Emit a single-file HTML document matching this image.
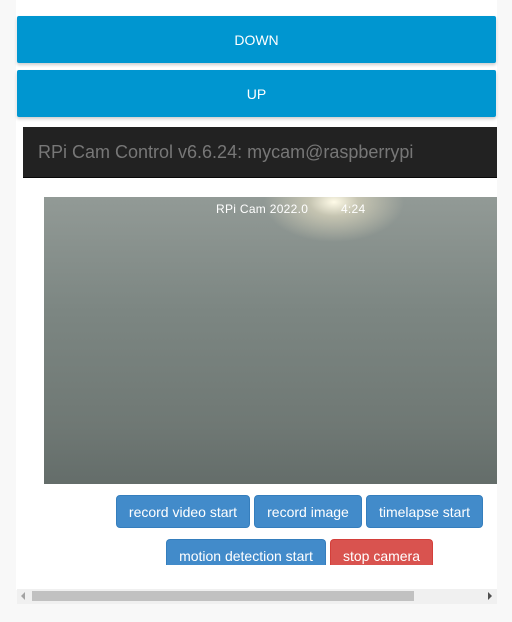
<!DOCTYPE html><html><head><style>
body{margin:0;width:512px;height:622px;background:#f8f8f8;font-family:"Liberation Sans",sans-serif;position:relative;overflow:hidden}
.a{position:absolute}
.w{left:16px;top:0;width:481px;height:590px;background:#fff}
.bb{left:17px;width:479px;height:47px;background:#0096d0;color:#fff;font-size:14px;display:flex;align-items:center;justify-content:center;border-radius:2px;box-shadow:0 2px 3px rgba(0,0,0,.2)}
.h{left:23px;top:127px;width:474px;height:50px;background:#222;color:#777;font-size:18px;line-height:50px;text-indent:15px;border-bottom:1px solid #080808}
.img{left:44px;top:197px;width:453px;height:287px;background:radial-gradient(ellipse 70px 40px at 290px 5px,#fffbe8,rgba(220,215,190,.7) 35%,rgba(160,165,155,0) 100%),linear-gradient(#929a96,#7c8682 40%,#6f7874 80%,#646d6a);}
.img span{position:absolute;left:172px;top:5px;color:#fff;font-size:12px;letter-spacing:.3px}
.b{height:33px;top:495px;background:#428bca;border:1px solid #357ebd;border-radius:4px;color:#fff;font-size:14px;display:flex;align-items:center;justify-content:center;box-sizing:border-box}
.c{top:539px;height:26px;border-bottom:none;border-radius:4px 4px 0 0;align-items:flex-start;padding-top:8px}
.r{background:#d9534f;border-color:#d43f3a}
.sb{left:17px;top:589px;width:480px;height:15px;background:#f0f0f0}
.th{left:32px;top:591px;width:382px;height:10px;background:#c1c1c1}
</style></head><body>
<div class="a w"></div>
<div class="a bb" style="top:16px">DOWN</div>
<div class="a bb" style="top:70px">UP</div>
<div class="a h">RPi Cam Control v6.6.24: mycam@raspberrypi</div>
<div class="a img"><span>RPi Cam 2022.0&nbsp;&nbsp;&nbsp;&nbsp;&nbsp;&nbsp;&nbsp;&nbsp;&nbsp;4:24</span></div>
<div class="a b" style="left:116px;width:134px">record video start</div>
<div class="a b" style="left:254px;width:108px">record image</div>
<div class="a b" style="left:366px;width:117px">timelapse start</div>
<div class="a b c" style="left:166px;width:160px">motion detection start</div>
<div class="a b c r" style="left:330px;width:103px">stop camera</div>
<div class="a sb"></div><div class="a th"></div>
<div class="a" style="left:21px;top:592px;width:0;height:0;border:4px solid transparent;border-right:4px solid #a3a3a3;border-left:0"></div>
<div class="a" style="left:488px;top:592px;width:0;height:0;border:4px solid transparent;border-left:4px solid #505050;border-right:0"></div>
</body></html>
